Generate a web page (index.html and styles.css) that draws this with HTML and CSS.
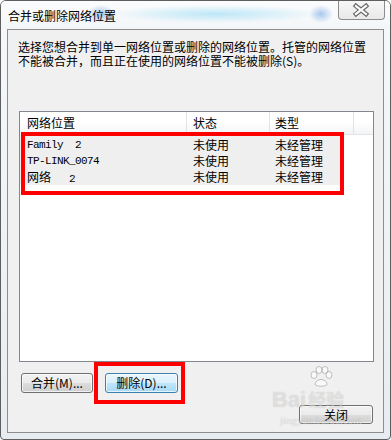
FILE: index.html
```html
<!DOCTYPE html>
<html>
<head>
    <meta charset="utf-8">
    <title>合并或删除网络位置</title>
    <link rel="stylesheet" href="styles.css">
</head>
<body>
    <div class="window">
        <div class="titlebar">
            <span class="title">合并或删除网络位置</span>
            <div class="close-x">
                <svg width="47" height="20" viewBox="0 0 47 20">
                    <path d="M19 6 L29 14 M29 6 L19 14" stroke="#6a6a6a" stroke-width="4.6" stroke-linecap="square" fill="none"/>
                    <path d="M19 6 L29 14 M29 6 L19 14" stroke="#ffffff" stroke-width="2.2" stroke-linecap="square" fill="none"/>
                </svg>
            </div>
        </div>

        <div class="client">
            <p class="desc">选择您想合并到单一网络位置或删除的网络位置。托管的网络位置<br>不能被合并，而且正在使用的网络位置不能被删除(S)。</p>

            <div class="list">
                <div class="list-head">
                    <div class="col c1">网络位置</div>
                    <div class="col c2">状态</div>
                    <div class="col c3">类型</div>
                    <div class="col c4"></div>
                </div>
                <div class="rows">
                    <div class="row">
                        <span class="c1 mono">Family  2</span>
                        <span class="c2">未使用</span>
                        <span class="c3">未经管理</span>
                    </div>
                    <div class="row">
                        <span class="c1 mono">TP-LINK_0074</span>
                        <span class="c2">未使用</span>
                        <span class="c3">未经管理</span>
                    </div>
                    <div class="row">
                        <span class="c1">网络<span class="mono">   2</span></span>
                        <span class="c2">未使用</span>
                        <span class="c3">未经管理</span>
                    </div>
                </div>
            </div>

            <div class="actions">
                <button class="btn btn-merge">合并(M)...</button>
                <button class="btn btn-default btn-delete">删除(D)...</button>
            </div>

            <div class="footer">
                <button class="btn btn-close">关闭</button>
            </div>

            <!-- marcas vermelhas da captura -->
            <div class="mark mark-list"></div>
            <div class="mark mark-btn"></div>

            <div class="watermark">
                <svg class="wm-paw" width="26" height="22" viewBox="0 0 26 22">
                    <g fill="rgba(255,255,255,0.6)" stroke="rgba(0,0,0,0.22)" stroke-width="1">
                        <ellipse cx="6" cy="9" rx="3" ry="3.5"/>
                        <ellipse cx="11" cy="4" rx="3" ry="3.5"/>
                        <ellipse cx="17" cy="4" rx="3" ry="3.5"/>
                        <ellipse cx="21" cy="9" rx="3" ry="3.5"/>
                        <path d="M7 18 C8 12 18 12 19 18 C19 21 7 21 7 18 Z"/>
                    </g>
                </svg>
                <div class="wm-logo">Bai<span class="wm-cn">经验</span></div>
                <div class="wm-url">jingyan.baidu.com</div>
            </div>
        </div>
    </div>
</body>
</html>
```

FILE: styles.css
```css
html, body {
    margin: 0;
    padding: 0;
}

body {
    width: 391px;
    height: 440px;
    font-family: "Noto Sans CJK SC", "DejaVu Sans", sans-serif;
    font-size: 12px;
    color: #000;
    background: #ffffff;
}

.window {
    box-sizing: border-box;
    width: 391px;
    height: 440px;
    display: flex;
    flex-direction: column;
    border: 1px solid #5e5e5e;
    border-radius: 6px 6px 4px 4px;
    background: linear-gradient(180deg, #f6f8fa 0%, #eef2f5 60%, #e6ecf1 100%);
    overflow: hidden;
}

.titlebar {
    height: 28px;
    display: flex;
    justify-content: space-between;
    align-items: flex-start;
    padding-left: 7px;
    background:
        radial-gradient(ellipse 14px 9px at 100px 13px, rgba(90, 150, 225, 0.55), transparent),
        radial-gradient(ellipse 12px 9px at 320px 13px, rgba(90, 150, 225, 0.5), transparent),
        radial-gradient(ellipse 105px 9px at 215px 13px, rgba(140, 215, 245, 0.55), transparent),
        linear-gradient(180deg, #fbfcfd, #f3f6f8);
}

.title {
    line-height: 28px;
    padding-top: 1px;
    font-size: 12px;
}

.close-x {
    width: 47px;
    height: 20px;
    margin-top: -1px;
    margin-right: 5px;
    box-sizing: border-box;
    border: 1px solid #8c8c8c;
    border-top: none;
    border-radius: 0 0 4px 4px;
    background: linear-gradient(180deg, #f7f7f7, #e9e9e9);
    display: flex;
    align-items: center;
    justify-content: center;
}

.close-x svg {
    display: block;
    margin-left: -2px;
}

.client {
    position: relative;
    flex: 1;
    margin: 0 6px 6px 6px;
    border: 1px solid #8d8d8d;
    background: #f0f0f0;
    display: flex;
    flex-direction: column;
}

.desc {
    margin: 0;
    padding: 10px 10px 0 10px;
    line-height: 14px;
    font-size: 12px;
    white-space: nowrap;
}

.list {
    box-sizing: border-box;
    height: 251px;
    margin: 43px 9px 0 11px;
    border: 1px solid #828790;
    background: #ffffff;
}

.list-head {
    display: flex;
    height: 23px;
    box-sizing: border-box;
    border-bottom: 1px solid #e3e4e6;
    background: linear-gradient(180deg, #ffffff 0%, #ffffff 45%, #f3f4f6 100%);
}

.list-head .col {
    box-sizing: border-box;
    line-height: 22px;
    border-right: 1px solid #e2e3e5;
}

.list-head .c1 { width: 167px; padding-left: 7px; }
.list-head .c2 { width: 83px; padding-left: 6px; }
.list-head .c3 { width: 84px; padding-left: 5px; }
.list-head .c4 { flex: 1; border-right: none; }

.rows {
    width: 322px;
    padding: 2px 0 0 0;
    height: 48px;
    background: #efefef;
}

.row {
    display: flex;
    height: 16px;
    line-height: 16px;
    white-space: pre;
}

.row span {
    box-sizing: border-box;
}

.row .c1 { width: 167px; padding-left: 7px; }
.row .c2 { width: 83px; padding-left: 6px; }
.row .c3 { width: 72px; padding-left: 5px; }

.mono {
    font-family: "Liberation Mono", monospace;
    font-size: 11px;
    letter-spacing: -0.6px;
}

.actions {
    display: flex;
    gap: 12px;
    margin-top: 11px;
    padding-left: 13px;
}

.footer {
    display: flex;
    justify-content: flex-end;
    margin-top: 12px;
    padding-right: 10px;
}

.btn {
    box-sizing: border-box;
    height: 20px;
    padding: 0;
    font-family: "Noto Sans CJK SC", "DejaVu Sans", sans-serif;
    font-size: 12px;
    line-height: 18px;
    color: #000;
    border: 1px solid #707070;
    border-radius: 3px;
    background: linear-gradient(180deg, #f2f2f2 0%, #ebebeb 50%, #dddddd 51%, #cfcfcf 100%);
    box-shadow: inset 0 0 0 1px rgba(255, 255, 255, 0.7);
    cursor: pointer;
}

.btn-merge { width: 72px; }
.btn-delete { width: 73px; }
.btn-close { width: 74px; height: 19px; line-height: 17px; }

.btn-default {
    border-color: #3c7fb1;
    background: linear-gradient(180deg, #eaf6fd 0%, #d9f0fc 50%, #bee6fd 51%, #a7d9f5 100%);
}

.mark {
    position: absolute;
    box-sizing: border-box;
    border: 4px solid #ff0000;
}

.mark-list {
    left: 13px;
    top: 102px;
    width: 323px;
    height: 63px;
}

.mark-btn {
    left: 86px;
    top: 332px;
    width: 91px;
    height: 42px;
}

.watermark {
    position: absolute;
    left: 264px;
    top: 336px;
    width: 100px;
    color: rgba(255, 255, 255, 0.5);
    text-shadow: 0 0 1px rgba(0, 0, 0, 0.22);
    pointer-events: none;
}

.wm-paw {
    display: block;
    margin-left: 36px;
}

.wm-logo {
    font-family: "Liberation Sans", sans-serif;
    font-size: 22px;
    font-weight: bold;
    line-height: 22px;
}

.wm-cn {
    font-family: "Noto Sans CJK SC", sans-serif;
    font-size: 18px;
    margin-left: 2px;
}

.wm-url {
    font-family: "Liberation Serif", serif;
    font-size: 11px;
    line-height: 12px;
    margin-top: 3px;
    margin-left: 8px;
}
```
